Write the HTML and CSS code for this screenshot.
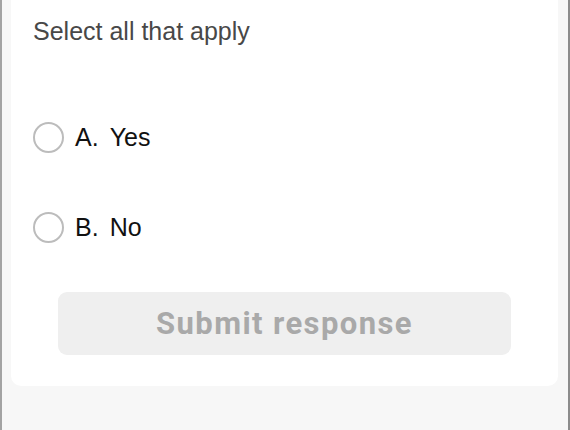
FILE: index.html
```html
<!DOCTYPE html>
<html lang="en">
<head>
    <meta charset="UTF-8">
    <title>Poll</title>
    <link rel="stylesheet" href="styles.css">
</head>

<body>
    <div class="frame">
        <div class="card">
            <p class="hint">Select all that apply</p>

            <ul class="options">
                <li>
                    <span class="radio"></span>
                    <span class="letter">A.</span>
                    <span class="label">Yes</span>
                </li>
                <li>
                    <span class="radio"></span>
                    <span class="letter">B.</span>
                    <span class="label">No</span>
                </li>
            </ul>

            <button class="submit" disabled>Submit response</button>
        </div>
    </div>
</body></html>
```

FILE: styles.css
```css
html,
body {
    margin: 0;
    padding: 0;
}

body {
    font-family: "Liberation Sans", Arial, sans-serif;
    background-color: #f7f7f7;
}

/* 화면 양옆 회색 테두리 */
.frame {
    min-height: 430px;
    border-left: 2px solid #a3a3a3;
    border-right: 2px solid #8c8c8c;
    box-sizing: border-box;
}

.card {
    margin: 0 10px 0 9px;
    padding: 16px 47px 31px 22px;
    background-color: #fff;
    border-radius: 0 0 10px 10px;
}

.hint {
    margin: 0;
    font-size: 25px;
    line-height: 30px;
    color: #484848;
}

.options {
    margin: 76px 0 0;
    padding: 0;
    list-style: none;
    display: flex;
    flex-direction: column;
    gap: 60px;
}

.options li {
    display: flex;
    align-items: center;
    height: 30px;
    font-size: 25px;
    color: #111;
}

.radio {
    width: 27px;
    height: 27px;
    border: 2px solid #bcbcbc;
    border-radius: 50%;
    margin-right: 11px;
}

.letter {
    margin-right: 11px;
}

.submit {
    display: block;
    width: calc(100% - 25px);
    height: 63px;
    margin: 50px 0 0 25px;
    border: 0;
    border-radius: 9px;
    background-color: #efefef;
    color: #a9a9a9;
    font: bold 31px Roboto, "Liberation Sans", sans-serif;
    letter-spacing: 1.4px;
}
```
